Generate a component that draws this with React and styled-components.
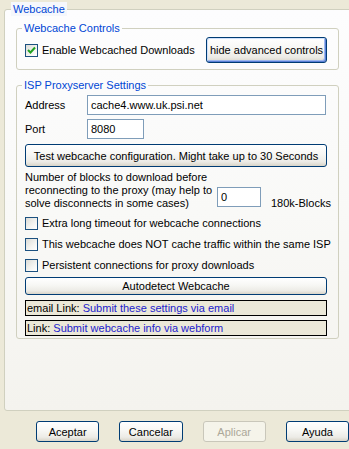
import React from "react";
import styled, { createGlobalStyle } from "styled-components";

const GlobalStyle = createGlobalStyle`
  html, body {
    margin: 0;
    padding: 0;
    background: #ece9d8;
  }
  body {
    font-family: "Liberation Sans", Arial, sans-serif;
    font-size: 11px;
    color: #000;
  }
`;

const Page = styled.div`
  width: 349px;
  height: 449px;
  overflow: hidden;
  padding-top: 2px;
  box-sizing: border-box;
  background: #ece9d8;
`;

const OuterGroup = styled.fieldset`
  margin: 0 0 0 4px;
  width: 380px;
  box-sizing: border-box;
  padding: 5px 0 71px 6px;
  border: 1px solid #d0d0bf;
  border-radius: 3px;
  background: linear-gradient(180deg, #fdfdfe 0%, #f9f9f7 50%, #f4f3ee 100%);
`;

const OuterLegend = styled.legend`
  padding: 0 2px;
  line-height: 14px;
  color: #0046d5;
  background: #f5f7fc;
`;

const Group = styled.fieldset`
  margin: ${p => (p.$top ? `${p.$top}px` : "0")} 0 0 5px;
  width: 323px;
  box-sizing: border-box;
  padding: ${p => p.$pad};
  border: 1px solid #d0d0bf;
  border-radius: 3px;
  min-width: 0;
`;

const Legend = styled.legend`
  margin-left: -3px;
  padding: 0 2px;
  line-height: 14px;
  color: #0046d5;
`;

const ControlsRow = styled.div`
  display: flex;
  align-items: center;
  justify-content: space-between;
  height: 26px;
`;

const Check = styled.span`
  display: inline-flex;
  align-items: center;
  justify-content: center;
  width: 13px;
  height: 13px;
  box-sizing: border-box;
  border: 1px solid #1c5180;
  background: linear-gradient(135deg, #dcdcd7 0%, #f4f4f1 60%, #ffffff 100%);
  flex: none;
`;

const CheckLabel = styled.label`
  display: flex;
  align-items: center;
  gap: 4px;
  height: ${p => p.$h || 13}px;
  line-height: 13px;
  white-space: nowrap;
`;

const XPButton = styled.button`
  display: flex;
  align-items: center;
  justify-content: center;
  box-sizing: border-box;
  height: ${p => p.$h}px;
  width: ${p => (p.$w ? `${p.$w}px` : "100%")};
  margin: ${p => p.$mt || 0}px 0 0 0;
  padding: 0 4px;
  font-family: "Liberation Sans", Arial, sans-serif;
  font-size: 11px;
  color: ${p => (p.disabled ? "#aca899" : "#000")};
  border: 1px solid ${p => (p.disabled ? "#c9c7ba" : "#003c74")};
  border-radius: 3px;
  background: ${p =>
    p.disabled
      ? "#f5f4ea"
      : "linear-gradient(180deg, #ffffff 0%, #f7f7f4 45%, #ecebe6 80%, #d8d4c8 100%)"};
  box-shadow: ${p =>
    p.$default
      ? "inset -1px -1px 0 #5b7fd6, inset 1px 1px 0 #cfe0fb, inset -2px -2px 0 #9db7ee"
      : "none"};
  white-space: nowrap;
`;

const FieldRow = styled.div`
  display: flex;
  align-items: center;
  height: 20px;
  margin-top: ${p => p.$mt || 0}px;
`;

const FieldLabel = styled.span`
  width: 62px;
  flex: none;
`;

const TextInput = styled.input`
  box-sizing: border-box;
  height: 20px;
  width: ${p => p.$w}px;
  margin: 0;
  padding: 0 3px;
  border: 1px solid #7f9db9;
  background: #fff;
  font-family: "Liberation Sans", Arial, sans-serif;
  font-size: 11px;
  color: #000;
  outline: none;
  flex: none;
`;

const BlocksRow = styled.div`
  display: flex;
  align-items: flex-end;
  margin-top: 4px;
`;

const BlocksText = styled.div`
  width: 192px;
  flex: none;
  line-height: 13px;
  white-space: nowrap;
`;

const BlocksInput = styled(TextInput)`
  margin-bottom: 3px;
`;

const BlocksUnit = styled.span`
  margin-left: 10px;
  line-height: 13px;
  white-space: nowrap;
`;

const CheckList = styled.div`
  display: flex;
  flex-direction: column;
  margin-top: 3px;
`;

const LinkBox = styled.div`
  box-sizing: border-box;
  height: 16px;
  margin-top: ${p => p.$mt}px;
  padding-left: 1px;
  border: 1px solid #000;
  background: #ebe8d8;
  line-height: 14px;
  white-space: nowrap;
`;

const LinkText = styled.span`
  color: #2222cc;
  cursor: pointer;
`;

const ButtonBar = styled.div`
  display: flex;
  gap: 20px;
  margin-top: 10px;
  padding-left: 36px;
`;

const CheckMark = () => (
  <svg width="9" height="9" viewBox="0 0 9 9">
    <path d="M1 4 L3.5 6.5 L8 1.5" fill="none" stroke="#21a121" strokeWidth="2" />
  </svg>
);

const CheckBox = ({ checked, children, h }) => (
  <CheckLabel $h={h}>
    <Check>{checked && <CheckMark />}</Check>
    {children}
  </CheckLabel>
);

export default function App() {
  return (
    <Page>
      <GlobalStyle />
      <OuterGroup>
        <OuterLegend>Webcache</OuterLegend>

        <Group $pad="2px 11px 6px 8px">
          <Legend>Webcache Controls</Legend>
          <ControlsRow>
            <CheckBox checked>Enable Webcached Downloads</CheckBox>
            <XPButton $h={26} $w={121} $default>
              hide advanced controls
            </XPButton>
          </ControlsRow>
        </Group>

        <Group $top={8} $pad="3px 11px 2px 8px">
          <Legend>ISP Proxyserver Settings</Legend>
          <FieldRow>
            <FieldLabel>Address</FieldLabel>
            <TextInput $w={239} defaultValue="cache4.www.uk.psi.net" />
          </FieldRow>
          <FieldRow $mt={4}>
            <FieldLabel>Port</FieldLabel>
            <TextInput $w={57} defaultValue="8080" />
          </FieldRow>
          <XPButton $h={23} $mt={5}>
            Test webcache configuration. Might take up to 30 Seconds
          </XPButton>
          <BlocksRow>
            <BlocksText>
              Number of blocks to download before
              <br />
              reconnecting to the proxy (may help to
              <br />
              solve disconnects in some cases)
            </BlocksText>
            <BlocksInput $w={44} defaultValue="0" />
            <BlocksUnit>180k-Blocks</BlocksUnit>
          </BlocksRow>
          <CheckList>
            <CheckBox h={21}>Extra long timeout for webcache connections</CheckBox>
            <CheckBox h={21}>This webcache does NOT cache traffic within the same ISP</CheckBox>
            <CheckBox h={21}>Persistent connections for proxy downloads</CheckBox>
          </CheckList>
          <XPButton $h={18} $mt={1}>
            Autodetect Webcache
          </XPButton>
          <LinkBox $mt={5}>
            email Link: <LinkText>Submit these settings via email</LinkText>
          </LinkBox>
          <LinkBox $mt={4}>
            Link: <LinkText>Submit webcache info via webform</LinkText>
          </LinkBox>
        </Group>
      </OuterGroup>

      <ButtonBar>
        <XPButton $h={21} $w={64}>Aceptar</XPButton>
        <XPButton $h={21} $w={64}>Cancelar</XPButton>
        <XPButton $h={21} $w={64} disabled>Aplicar</XPButton>
        <XPButton $h={21} $w={64}>Ayuda</XPButton>
      </ButtonBar>
    </Page>
  );
}
